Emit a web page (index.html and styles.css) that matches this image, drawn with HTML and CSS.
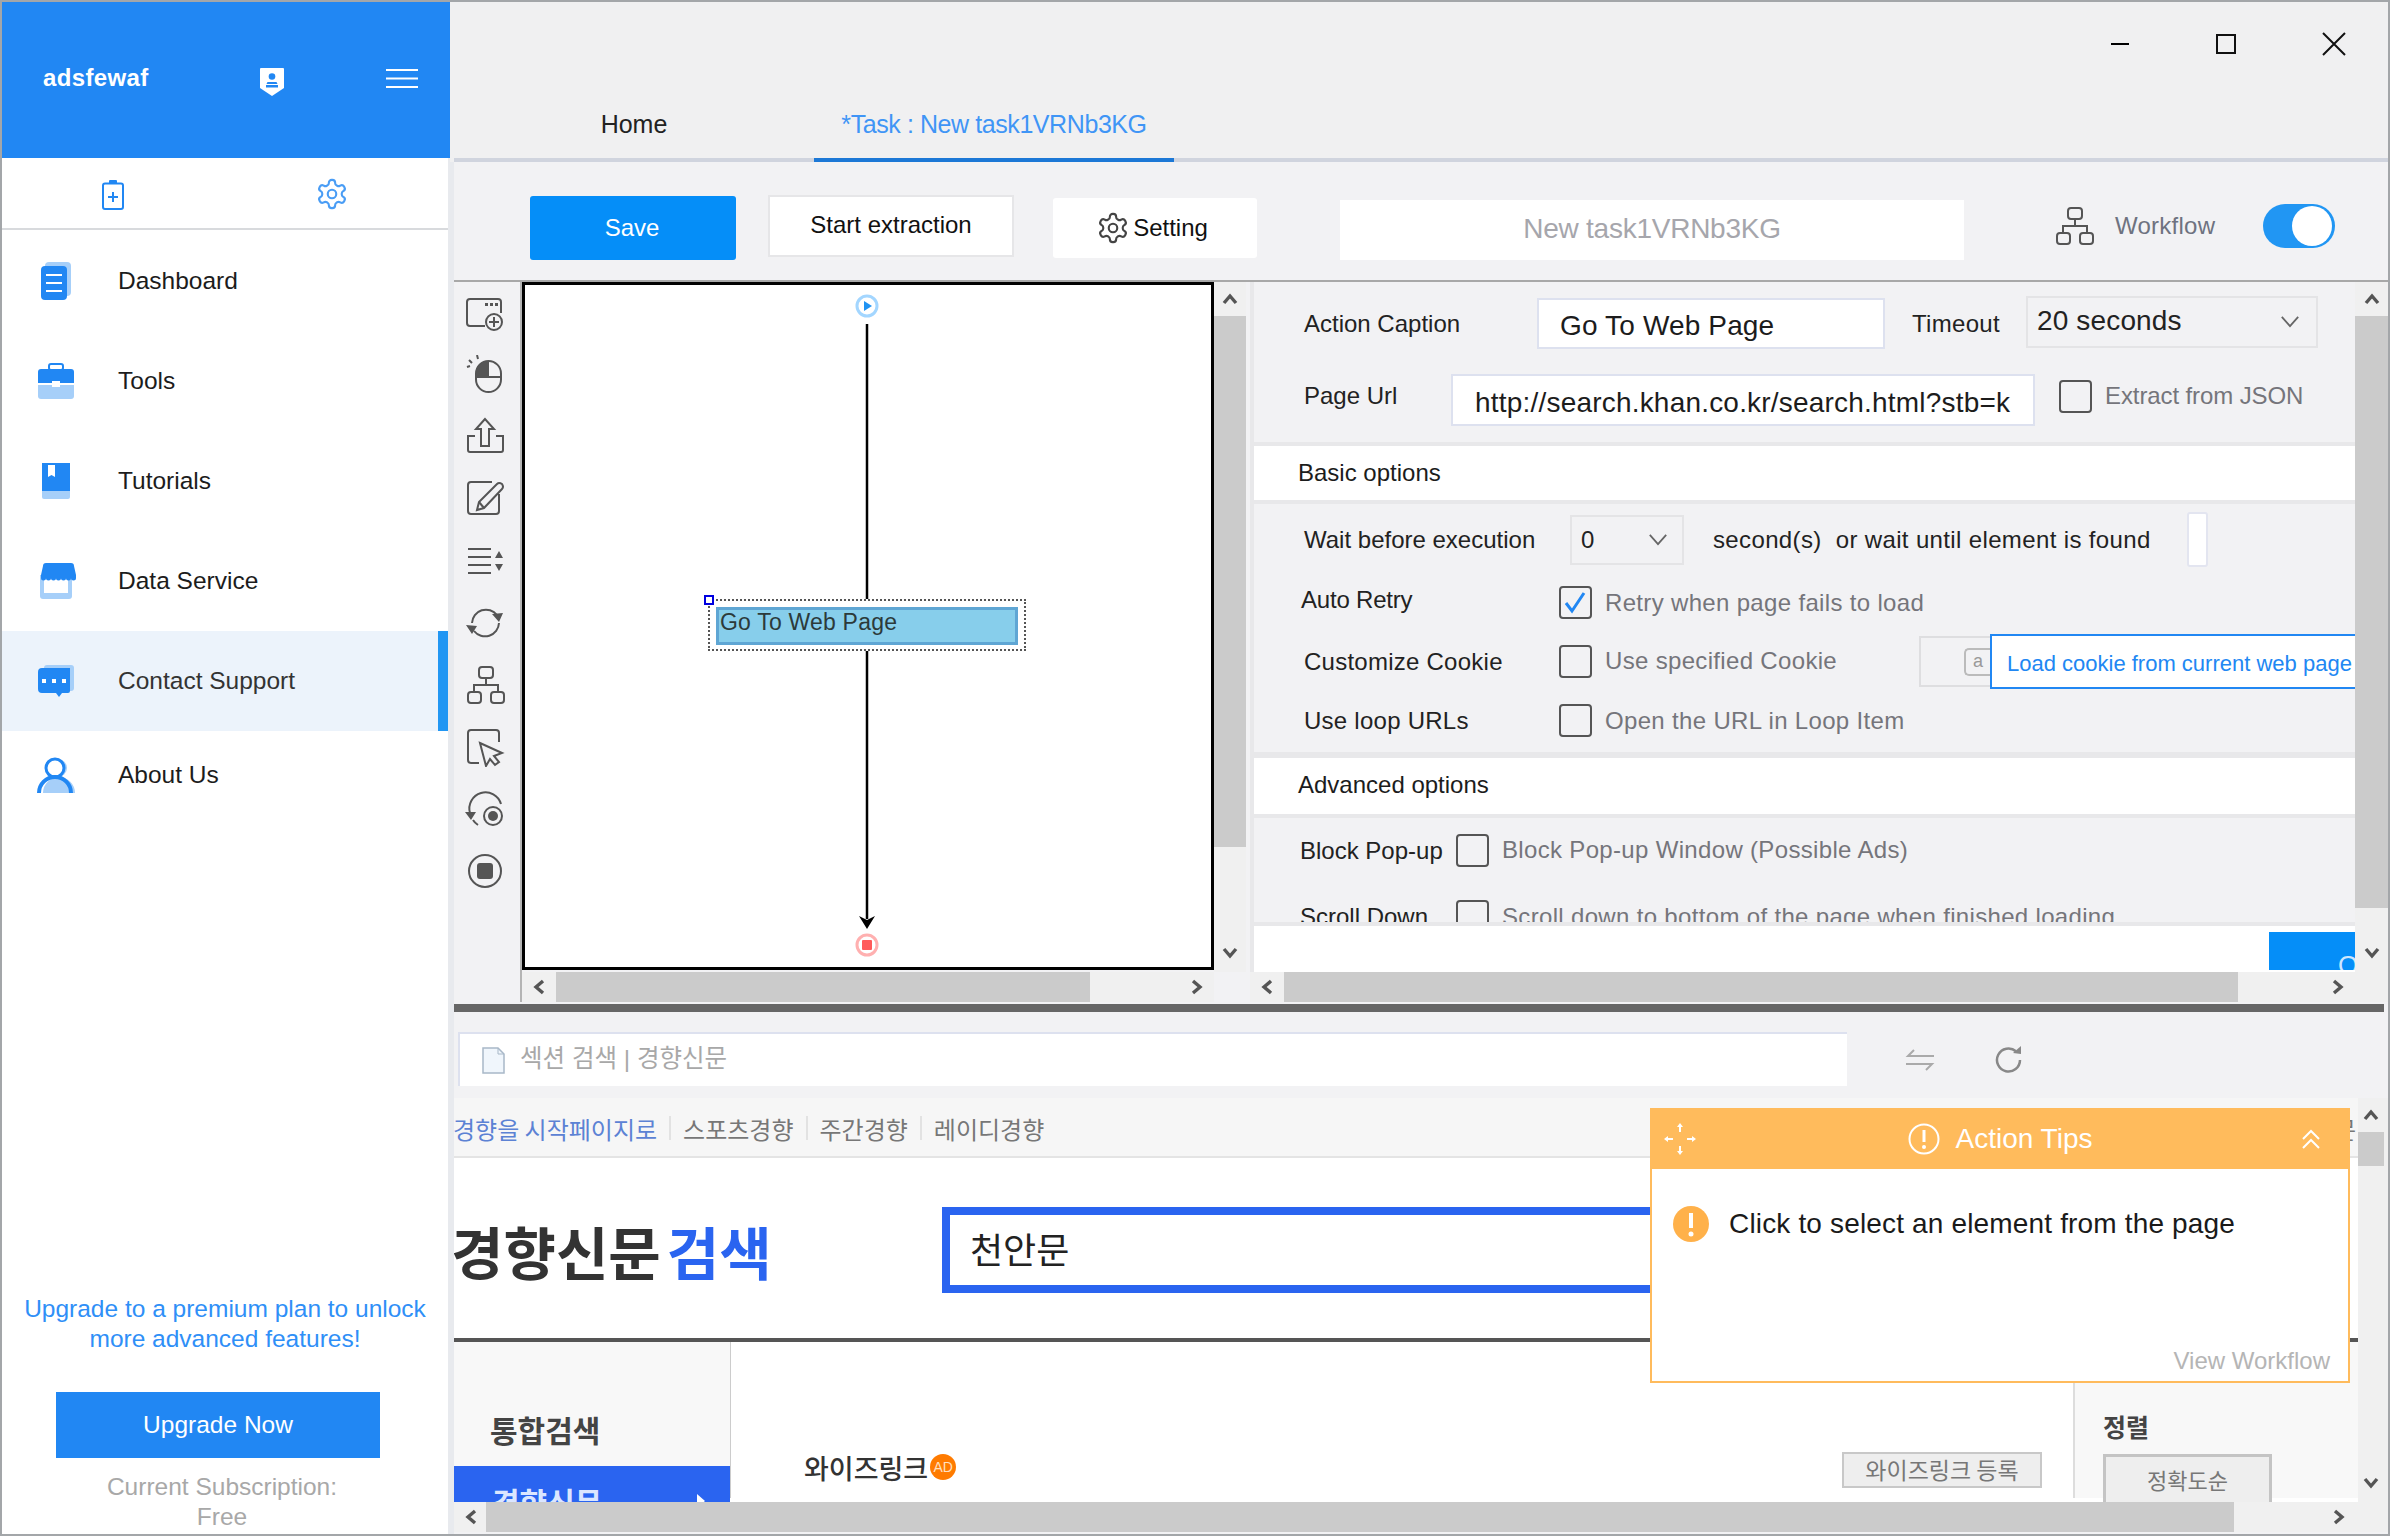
FILE: index.html
```html
<!DOCTYPE html>
<html lang="en">
<head>
  <meta charset="UTF-8">
  <title>Task designer</title>
  <link rel="stylesheet" href="styles.css">
</head>
<body>
<svg class="defs" xmlns="http://www.w3.org/2000/svg">
  <symbol id="gear" viewBox="0 0 24 24"><path d="M12.22 2h-.44a2 2 0 0 0-2 2v.18a2 2 0 0 1-1 1.73l-.43.25a2 2 0 0 1-2 0l-.15-.08a2 2 0 0 0-2.73.73l-.22.38a2 2 0 0 0 .73 2.73l.15.1a2 2 0 0 1 1 1.72v.51a2 2 0 0 1-1 1.74l-.15.09a2 2 0 0 0-.73 2.73l.22.38a2 2 0 0 0 2.73.73l.15-.08a2 2 0 0 1 2 0l.43.25a2 2 0 0 1 1 1.73V20a2 2 0 0 0 2 2h.44a2 2 0 0 0 2-2v-.18a2 2 0 0 1 1-1.73l.43-.25a2 2 0 0 1 2 0l.15.08a2 2 0 0 0 2.73-.73l.22-.39a2 2 0 0 0-.73-2.73l-.15-.08a2 2 0 0 1-1-1.74v-.5a2 2 0 0 1 1-1.74l.15-.09a2 2 0 0 0 .73-2.73l-.22-.38a2 2 0 0 0-2.73-.73l-.15.08a2 2 0 0 1-2 0l-.43-.25a2 2 0 0 1-1-1.73V4a2 2 0 0 0-2-2z" fill="none" stroke="currentColor" stroke-width="1.5"/><circle cx="12" cy="12" r="3" fill="none" stroke="currentColor" stroke-width="1.5"/></symbol>
  <symbol id="tree" viewBox="0 0 40 40"><g fill="none" stroke="currentColor" stroke-width="2"><rect x="14" y="2" width="14" height="11" rx="3"/><path d="M21 13v7M9 27v-7h24v7"/><rect x="3" y="27" width="13" height="11" rx="3"/><rect x="26" y="27" width="13" height="11" rx="3"/></g></symbol>
  <symbol id="a-up" viewBox="0 0 16 16"><path d="M2 12 8 5l6 7" fill="none" stroke="currentColor" stroke-width="3.4"/></symbol>
  <symbol id="a-down" viewBox="0 0 16 16"><path d="M2 4l6 7 6-7" fill="none" stroke="currentColor" stroke-width="3.4"/></symbol>
  <symbol id="a-left" viewBox="0 0 16 16"><path d="M12 2 5 8l7 6" fill="none" stroke="currentColor" stroke-width="3.4"/></symbol>
  <symbol id="a-right" viewBox="0 0 16 16"><path d="M4 2l7 6-7 6" fill="none" stroke="currentColor" stroke-width="3.4"/></symbol>
  <symbol id="chev" viewBox="0 0 22 14"><path d="M2 2l9 10 9-10" fill="none" stroke="currentColor" stroke-width="2"/></symbol>
</svg>

<div class="window">
  <aside class="sidebar">
    <div class="side-head">
      <span class="user">adsfewaf</span>
      <svg class="shield" viewBox="0 0 24 28"><path d="M1 0h22a1 1 0 0 1 1 1v19l-12 8-12-8V1a1 1 0 0 1 1-1z" fill="#fff"/><circle cx="12" cy="8.5" r="3.3" fill="#2187f3"/><path d="M7.500 14h9l1 2h-11zM6 17h12v2.500H6z" fill="#2187f3"/></svg>
      <svg class="burger" viewBox="0 0 32 19"><path d="M0 1h32M0 9.500h32M0 18h32" stroke="#fff" stroke-width="2"/></svg>
    </div>
    <div class="side-body">
      <div class="side-tabs">
        <svg class="side-tab clip" viewBox="0 0 22 30"><rect x="1" y="3.500" width="20" height="25.500" rx="2" fill="none" stroke="#2187f3" stroke-width="2"/><rect x="7" y="0" width="8" height="4" rx="1" fill="#2187f3"/><path d="M11 12v10M6 17h10" stroke="#2187f3" stroke-width="2"/></svg>
        <svg class="side-tab cog"><use href="#gear"/></svg>
      </div>
      <nav class="nav">
        <a class="nav-item">
          <span class="nav-icon"><svg width="30" height="38" viewBox="0 0 30 38"><rect x="4" y="0" width="26" height="34" rx="4" fill="#a6cff9"/><rect x="0" y="4" width="26" height="34" rx="4" fill="#2187f3"/><path d="M5 13h16M5 21h16M5 29h16" stroke="#fff" stroke-width="2"/></svg></span>
          Dashboard
        </a>
        <a class="nav-item">
          <span class="nav-icon"><svg width="36" height="36" viewBox="0 0 36 36"><rect x="11" y="1" width="14" height="6" rx="2" fill="none" stroke="#2187f3" stroke-width="2"/><path d="M0 9a3 3 0 0 1 3-3h30a3 3 0 0 1 3 3v11H0z" fill="#2187f3"/><path d="M0 22h36v11a3 3 0 0 1-3 3H3a3 3 0 0 1-3-3z" fill="#a6cff9"/><rect x="14" y="18" width="8" height="6" fill="#fff"/></svg></span>
          Tools
        </a>
        <a class="nav-item">
          <span class="nav-icon"><svg width="28" height="36" viewBox="0 0 28 36"><path d="M0 0h28v28H0z" fill="#2187f3"/><path d="M0 28h28v6a2 2 0 0 1-2 2H2a2 2 0 0 1-2-2z" fill="#a6cff9"/><path d="M6 2h7v12l-3.500-2L6 14z" fill="#fff"/></svg></span>
          Tutorials
        </a>
        <a class="nav-item">
          <span class="nav-icon"><svg width="40" height="36" viewBox="0 0 40 36"><path d="M4 12h32v21a3 3 0 0 1-3 3H7a3 3 0 0 1-3-3z" fill="#a6cff9"/><rect x="8" y="16" width="24" height="14" fill="#fff"/><path d="M5 0h30a3 3 0 0 1 3 3l2 9v3a2 2 0 0 1-5 0 2.500 2.500 0 0 1-5 0 2.500 2.500 0 0 1-5 0 2.500 2.500 0 0 1-5 0 2.500 2.500 0 0 1-5 0 2.500 2.500 0 0 1-5 0 2 2 0 0 1-5 0v-3l2-9a3 3 0 0 1 3-3z" fill="#2187f3"/></svg></span>
          Data Service
        </a>
        <a class="nav-item active">
          <span class="nav-icon"><svg width="36" height="32" viewBox="0 0 36 32"><rect x="6" y="0" width="30" height="26" rx="3" fill="#a6cff9"/><path d="M4 3h28a4 4 0 0 1 0 0v23a2 2 0 0 1-2 2H24l-3 4-3-4H4a4 4 0 0 1-4-4V7a4 4 0 0 1 4-4z" fill="#2187f3"/><path d="M4 16h4M14 16h4M24 16h4" stroke="#fff" stroke-width="4"/></svg></span>
          Contact Support
        </a>
        <a class="nav-item last">
          <span class="nav-icon"><svg width="38" height="36" viewBox="0 0 38 36"><circle cx="21" cy="11" r="9" fill="#a6cff9"/><path d="M38 36a16 16 0 0 0-32 0z" fill="#a6cff9"/><circle cx="18" cy="11" r="9" fill="#fff" stroke="#2187f3" stroke-width="3"/><path d="M2 36a16 16 0 0 1 32 0" fill="none" stroke="#2187f3" stroke-width="4"/></svg></span>
          About Us
        </a>
      </nav>
      <div class="side-foot">
        <p class="promo">Upgrade to a premium plan to unlock more advanced features!</p>
        <button class="upgrade">Upgrade Now</button>
        <p class="plan">Current Subscription:<br>Free</p>
      </div>
    </div>
  </aside>

  <main class="main">
    <header class="topbar">
      <div class="win-btns">
        <span class="win-btn"><svg class="win-min" width="18" height="2"><rect width="18" height="2" fill="#000"/></svg></span>
        <span class="win-btn"><svg width="20" height="20" viewBox="0 0 20 20"><rect x="1" y="1" width="18" height="18" fill="none" stroke="#111" stroke-width="2"/></svg></span>
        <span class="win-btn"><svg width="24" height="24" viewBox="0 0 24 24"><path d="M1 1l22 22M23 1L1 23" stroke="#111" stroke-width="2"/></svg></span>
      </div>
      <div class="tabs">
        <span class="tab">Home</span>
        <span class="tab current">*Task : New task1VRNb3KG</span>
      </div>
    </header>

    <div class="content">
      <div class="toolbar">
        <button class="btn-save">Save</button>
        <button class="btn-start">Start extraction</button>
        <button class="btn-setting"><svg class="set-gear"><use href="#gear"/></svg>Setting</button>
        <div class="task-name">New task1VRNb3KG</div>
        <svg class="wf-icon"><use href="#tree"/></svg>
        <span class="wf-label">Workflow</span>
        <span class="toggle"><span class="knob"></span></span>
      </div>

      <div class="designer">
        <section class="flow-pane">
          <div class="tools">
            <span class="tool"><svg viewBox="0 0 40 40"><g fill="none" stroke="#555" stroke-width="2"><path d="M36 20V9a3 3 0 0 0-3-3H5a3 3 0 0 0-3 3v21a3 3 0 0 0 3 3h15"/><circle cx="29" cy="29" r="8"/><path d="M29 24v10M24 29h10"/></g><path d="M20 10h3v3h-3zM25 10h3v3h-3zM30 10h3v3h-3z" fill="#555"/></svg></span>
            <span class="tool"><svg viewBox="0 0 40 40"><rect x="11" y="6" width="25" height="31" rx="12.500" fill="none" stroke="#555" stroke-width="2"/><path d="M23 6v16H11V18A12 12 0 0 1 23 6z" fill="#555"/><path d="M11 22h25M23 6v16" stroke="#555" stroke-width="2"/><path d="M12 0l1 4M4 5l3 3M2 12l3-1" stroke="#555" stroke-width="2"/></svg></span>
            <span class="tool"><svg viewBox="0 0 40 40"><g fill="none" stroke="#555" stroke-width="2"><path d="M10 19H3v14a2 2 0 0 0 2 2h31a2 2 0 0 0 2-2V19h-7"/><path d="M20 2l-9 10h5v17h8V12h5z"/></g></svg></span>
            <span class="tool"><svg viewBox="0 0 40 40"><g fill="none" stroke="#555" stroke-width="2"><path d="M27 3H6a3 3 0 0 0-3 3v26a3 3 0 0 0 3 3h25a3 3 0 0 0 3-3V15"/><path d="M12 31l2-8L32 5q2-2 5 0 2 3 0 5L19 29z"/><path d="M14 23l5 6"/></g></svg></span>
            <span class="tool"><svg viewBox="0 0 40 40"><path d="M3 8h23M3 16h23M3 24h23M3 32h23" stroke="#555" stroke-width="2"/><path d="M34 10l4 7h-8zM34 30l4-7h-8z" fill="#555"/></svg></span>
            <span class="tool"><svg viewBox="0 0 40 40"><g fill="none" stroke="#555" stroke-width="2"><path d="M7 20A14 14 0 0 1 32 12"/><path d="M34 20A14 14 0 0 1 9 28"/></g><path d="M27 11l11-1-4 9zM1 22l6 9 5-8z" fill="#555"/></svg></span>
            <span class="tool"><svg class="tool-tree"><use href="#tree"/></svg></span>
            <span class="tool"><svg viewBox="0 0 40 40"><g fill="none" stroke="#555" stroke-width="2"><path d="M14 36H6a3 3 0 0 1-3-3V6a3 3 0 0 1 3-3h25a3 3 0 0 1 3 3v9"/><path d="M15 16l22 10-8 3 5 6-4 3-5-6-4 7z"/></g></svg></span>
            <span class="tool"><svg viewBox="0 0 40 40"><g fill="none" stroke="#555" stroke-width="2"><path d="M5 24A15 15 0 0 1 36 15"/><path d="M13 36a16 16 0 0 1-5-5"/><circle cx="28" cy="27" r="9"/></g><circle cx="28" cy="27" r="5" fill="#555"/><path d="M0 23l6 8 5-8z" fill="#555"/></svg></span>
            <span class="tool"><svg viewBox="0 0 40 40"><circle cx="20" cy="20" r="16" fill="none" stroke="#555" stroke-width="2"/><rect x="12" y="12" width="16" height="16" rx="3" fill="#555"/></svg></span>
          </div>
          <div class="canvas">
            <svg class="links"><path d="M342 39V317M342 363V634" stroke="#000" stroke-width="2.500" fill="none"/><path d="M334 631l8 4 8-4-8 13z" fill="#000"/></svg>
            <svg class="port port-start" viewBox="0 0 24 24"><circle cx="12" cy="12" r="10" fill="#fff" stroke="#a3d6ff" stroke-width="3"/><path d="M9 7l8 5-8 5z" fill="#1f93f3"/></svg>
            <div class="node-frame"><span class="node-handle"></span><div class="node">Go To Web Page</div></div>
            <svg class="port port-end" viewBox="0 0 24 24"><circle cx="12" cy="12" r="10" fill="#fff" stroke="#ffb0b0" stroke-width="3"/><rect x="7" y="7" width="10" height="10" rx="1" fill="#ff5a5a"/></svg>
          </div>
          <div class="vbar">
            <span class="sb-end"><svg class="sb-arrow"><use href="#a-up"/></svg></span>
            <span class="thumb flow-vthumb"></span>
            <span class="sb-fill"></span>
            <span class="sb-end last"><svg class="sb-arrow"><use href="#a-down"/></svg></span>
          </div>
          <div class="hbar flow-hbar">
            <span class="sb-end"><svg class="sb-arrow"><use href="#a-left"/></svg></span>
            <span class="thumb flow-hthumb"></span>
            <span class="sb-fill"></span>
            <span class="sb-end"><svg class="sb-arrow"><use href="#a-right"/></svg></span>
          </div>
        </section>

        <section class="props-pane">
          <div class="props">
            <div class="form">
              <div class="row row-caption">
                <label class="lbl">Action Caption</label>
                <div class="field caption-field">Go To Web Page</div>
                <label class="lbl timeout-lbl">Timeout</label>
                <div class="select timeout">20 seconds<svg class="chev"><use href="#chev"/></svg></div>
              </div>
              <div class="row row-url">
                <label class="lbl">Page Url</label>
                <div class="field url-field">http://search.khan.co.kr/search.html?stb=k</div>
                <span class="check json-check"></span>
                <span class="opt">Extract from JSON</span>
              </div>
              <div class="section">Basic options</div>
              <div class="section-body">
                <div class="row row-wait">
                  <label class="lbl">Wait before execution</label>
                  <div class="select wait">0<svg class="chev"><use href="#chev"/></svg></div>
                  <span class="wait-text">second(s)&nbsp; or wait until element is found</span>
                  <span class="wait-box"></span>
                </div>
                <div class="row row-check row-retry">
                  <label class="lbl">Auto Retry</label>
                  <span class="check"><svg width="29" height="29" viewBox="0 0 29 29"><path d="M5 15l6 8L23 5" fill="none" stroke="#2187f3" stroke-width="3"/></svg></span>
                  <span class="opt">Retry when page fails to load</span>
                </div>
                <div class="row row-check row-cookie">
                  <label class="lbl">Customize Cookie</label>
                  <span class="check"></span>
                  <span class="opt">Use specified Cookie</span>
                  <div class="cookie-input"><span class="cookie-a">a</span></div>
                  <div class="cookie-load">Load cookie from current web page</div>
                </div>
                <div class="row row-check row-loop">
                  <label class="lbl">Use loop URLs</label>
                  <span class="check"></span>
                  <span class="opt">Open the URL in Loop Item</span>
                </div>
              </div>
              <div class="section section-adv">Advanced options</div>
              <div class="row row-check row-block">
                <label class="lbl">Block Pop-up</label>
                <span class="check"></span>
                <span class="opt">Block Pop-up Window (Possible Ads)</span>
              </div>
              <div class="row row-check row-scroll">
                <label class="lbl">Scroll Down</label>
                <span class="check"></span>
                <span class="opt">Scroll down to bottom of the page when finished loading</span>
              </div>
            </div>
            <div class="props-foot"><button class="btn-ok">OK</button></div>
          </div>
          <div class="vbar">
            <span class="sb-end"><svg class="sb-arrow"><use href="#a-up"/></svg></span>
            <span class="thumb props-vthumb"></span>
            <span class="sb-fill"></span>
            <span class="sb-end last"><svg class="sb-arrow"><use href="#a-down"/></svg></span>
          </div>
          <div class="hbar props-hbar">
            <span class="sb-end"><svg class="sb-arrow"><use href="#a-left"/></svg></span>
            <span class="thumb props-hthumb"></span>
            <span class="sb-fill"></span>
            <span class="sb-end"><svg class="sb-arrow"><use href="#a-right"/></svg></span>
          </div>
        </section>
      </div>

      <div class="splitter"></div>

      <div class="browser-bar">
        <div class="address">
          <svg class="file-icon" viewBox="0 0 23 27"><path d="M1 1h15l6 6v19H1z" fill="#f0f6fc" stroke="#a8b8c8" stroke-width="1.500"/><path d="M16 1v6h6" fill="none" stroke="#a8b8c8"/></svg>
          섹션 검색 | 경향신문
        </div>
        <svg class="swap" viewBox="0 0 30 22"><path d="M29 7H3l6-6M1 15h26l-6 6" fill="none" stroke="#aaa" stroke-width="2"/></svg>
        <svg class="reload" viewBox="0 0 28 28"><path d="M25 14a11.500 11.500 0 1 1-4-8.700" fill="none" stroke="#888" stroke-width="2.500"/><path d="M18 7l8 1V0z" fill="#888"/></svg>
      </div>

      <div class="browser">
        <div class="webview">
          <div class="site-nav">
            <a class="site-link home">경향을 시작페이지로</a><i class="sep"></i>
            <a class="site-link">스포츠경향</a><i class="sep"></i>
            <a class="site-link">주간경향</a><i class="sep"></i>
            <a class="site-link">레이디경향</a>
            <a class="site-link site-end">문</a>
          </div>
          <div class="site-head">
            <div class="site-logo">경향신문 <em>검색</em></div>
            <div class="site-search">천안문</div>
          </div>
          <div class="site-body">
            <div class="site-left">
              <div class="site-all">통합검색</div>
              <div class="site-cur">경향신문<span class="cur-arrow"></span></div>
            </div>
            <div class="site-main">
              <span class="ad-title">와이즈링크</span>
              <span class="ad-badge">AD</span>
              <span class="ad-reg">와이즈링크 등록</span>
            </div>
            <div class="site-right">
              <div class="sort-title">정렬</div>
              <div class="sort-btn">정확도순</div>
            </div>
          </div>

          <div class="tips">
            <div class="tips-head">
              <svg class="tips-move" viewBox="0 0 32 32"><path d="M16 9V4M16 23v5M9 16H4M23 16h5" stroke="#fff" stroke-width="2"/><path d="M16 0l3 4h-6zM16 32l-3-4h6zM0 16l4-3v6zM32 16l-4 3v-6z" fill="#fff"/></svg>
              <div class="tips-title">
                <svg class="tips-info" viewBox="0 0 32 32"><circle cx="16" cy="16" r="14.500" fill="none" stroke="#fff" stroke-width="2"/><path d="M16 7v12" stroke="#fff" stroke-width="3"/><circle cx="16" cy="24" r="2" fill="#fff"/></svg>
                Action Tips
              </div>
              <svg class="tips-fold" viewBox="0 0 20 20"><path d="M2 10l8-8 8 8M2 19l8-8 8 8" fill="none" stroke="#fff" stroke-width="2"/></svg>
            </div>
            <div class="tips-body">
              <div class="tips-msg">
                <svg class="tips-warn" viewBox="0 0 36 36"><circle cx="18" cy="18" r="18" fill="#ffb14a"/><path d="M18 7v15" stroke="#fff" stroke-width="4"/><circle cx="18" cy="28" r="2.500" fill="#fff"/></svg>
                Click to select an element from the page
              </div>
              <a class="tips-link">View Workflow</a>
            </div>
          </div>
        </div>
        <div class="vbar web-vbar">
          <span class="sb-end"><svg class="sb-arrow"><use href="#a-up"/></svg></span>
          <span class="thumb web-vthumb"></span>
          <span class="sb-fill"></span>
          <span class="sb-end last"><svg class="sb-arrow"><use href="#a-down"/></svg></span>
        </div>
        <div class="hbar web-hbar">
          <span class="sb-end"><svg class="sb-arrow"><use href="#a-left"/></svg></span>
          <span class="thumb web-hthumb"></span>
          <span class="sb-fill"></span>
          <span class="sb-end"><svg class="sb-arrow"><use href="#a-right"/></svg></span>
        </div>
      </div>
    </div>
  </main>
</div>
</body>
</html>
```

FILE: styles.css
```css
* {
  box-sizing: border-box;
}

body {
  margin: 0;
  font-family: "Liberation Sans", Arial, "Noto Sans CJK KR", sans-serif;
  color: #222;
}

button {
  font-family: inherit;
  border: none;
  padding: 0;
  cursor: pointer;
}

.defs {
  display: none;
}

.window {
  display: flex;
  width: 2390px;
  height: 1536px;
  border: 2px solid #a3a6a9;
  background-color: #e8eaee;
  overflow: hidden;
}

/* sidebar */
.sidebar {
  display: flex;
  flex-direction: column;
  width: 448px;
  flex: none;
}

.side-head {
  display: flex;
  align-items: flex-start;
  height: 156px;
  background-color: #2187f3;
  color: white;
}

.user {
  margin: 60px 0 0 41px;
  width: 217px;
  font-size: 24px;
  line-height: 32px;
  font-weight: bold;
  letter-spacing: 0.35px;
}

.shield {
  width: 24px;
  height: 28px;
  margin-top: 66px;
}

.burger {
  width: 32px;
  height: 19px;
  margin: 67px 0 0 102px;
}

.side-body {
  display: flex;
  flex-direction: column;
  flex: 1;
  width: 446px;
  background-color: white;
}

.side-tabs {
  height: 72px;
  border-bottom: 2px solid #d8dadd;
  display: flex;
  align-items: flex-start;
}

.side-tab.clip {
  width: 22px;
  height: 30px;
  margin: 22px 0 0 100px;
}

.side-tab.cog {
  width: 34px;
  height: 34px;
  margin: 19px 0 0 191px;
  color: #4a9df5;
}

.nav {
  display: flex;
  flex-direction: column;
  margin-top: 1px;
}

.nav-item {
  display: flex;
  align-items: center;
  height: 100px;
  font-size: 24.5px;
  color: #1c1c1c;
}

.nav-item.active {
  background-color: #ecf3fb;
  border-right: 10px solid #2196f3;
  color: #333;
}

.nav-item.last {
  height: 88px;
}

.nav-icon {
  display: flex;
  justify-content: center;
  width: 108px;
  margin-right: 8px;
}

.side-foot {
  margin-top: auto;
  padding-bottom: 2px;
}

.promo {
  margin: 0;
  padding: 0 14px;
  font-size: 24.5px;
  line-height: 30px;
  text-align: center;
  color: #2f8ff7;
}

.upgrade {
  display: block;
  width: 324px;
  height: 66px;
  margin: 38px 0 0 54px;
  background-color: #2187f3;
  color: white;
  font-size: 24.5px;
}

.plan {
  margin: 14px 6px 0 0;
  font-size: 24.5px;
  line-height: 30px;
  text-align: center;
  color: #a8a8a8;
}

/* title bar and tabs */
.main {
  flex: 1;
  display: flex;
  flex-direction: column;
  min-width: 0;
}

.topbar {
  background-color: #f0f0f1;
}

.win-btns {
  display: flex;
  justify-content: flex-end;
  height: 84px;
}

.win-btn {
  display: flex;
  align-items: center;
  justify-content: center;
  width: 108px;
}

.win-min {
  margin-left: 3px;
}

.tabs {
  display: flex;
  margin-left: 4px;
  height: 76px;
  border-bottom: 4px solid #d0d4de;
}

.tab {
  width: 360px;
  height: 76px;
  padding-top: 22px;
  text-align: center;
  font-size: 25px;
  line-height: 32px;
}

.tab.current {
  color: #3f95f6;
  border-bottom: 4px solid #1c78d6;
  letter-spacing: -0.42px;
}

.content {
  flex: 1;
  display: flex;
  flex-direction: column;
  margin-left: 4px;
  background-color: #f2f2f4;
  min-height: 0;
}

/* toolbar */
.toolbar {
  display: flex;
  align-items: flex-start;
  height: 118px;
  font-size: 24px;
}

.btn-save {
  width: 206px;
  height: 64px;
  margin: 34px 0 0 76px;
  padding-right: 2px;
  border-radius: 3px;
  background-color: #058ef8;
  color: white;
  font-size: 24px;
}

.btn-start {
  width: 246px;
  height: 62px;
  margin: 33px 0 0 32px;
  background-color: white;
  border: 2px solid #e6e6e8;
  font-size: 24px;
  color: #111;
  padding-bottom: 2px;
}

.btn-setting {
  display: flex;
  align-items: center;
  justify-content: center;
  width: 204px;
  height: 60px;
  margin: 36px 0 0 39px;
  padding-right: 6px;
  background-color: white;
  border-radius: 3px;
  font-size: 24px;
  color: #111;
}

.set-gear {
  width: 34px;
  height: 34px;
  margin-right: 3px;
  color: #444;
}

.task-name {
  width: 624px;
  height: 60px;
  margin: 38px 0 0 83px;
  background-color: white;
  color: #a6a6ac;
  font-size: 28px;
  line-height: 58px;
  text-align: center;
  letter-spacing: -0.25px;
}

.wf-icon {
  width: 40px;
  height: 40px;
  margin: 44px 0 0 90px;
  color: #555;
}

.wf-label {
  margin: 47px 0 0 21px;
  width: 148px;
  line-height: 34px;
  color: #6e7280;
  letter-spacing: 0.25px;
}

.toggle {
  display: flex;
  justify-content: flex-end;
  align-items: center;
  width: 72px;
  height: 44px;
  margin-top: 42px;
  padding-right: 3px;
  border-radius: 22px;
  background-color: #2196f3;
}

.knob {
  width: 40px;
  height: 40px;
  border-radius: 50%;
  background-color: white;
}

/* designer */
.designer {
  display: flex;
  height: 724px;
  border-top: 2px solid #a8a8a8;
}

.flow-pane {
  display: grid;
  grid-template-columns: 68px 692px 32px;
  grid-template-rows: 690px 30px;
  width: 796px;
}

.tools {
  grid-row: 1 / 3;
  display: flex;
  flex-direction: column;
  border-right: 2px solid #b4b4b4;
}

.tool {
  display: flex;
  align-items: center;
  justify-content: center;
  height: 62px;
  flex: none;
}

.tool svg {
  width: 40px;
  height: 40px;
  margin-right: 4px;
}

.tool-tree {
  color: #555;
}

.canvas {
  position: relative;
  height: 688px;
  background-color: white;
  border: 3px solid #000;
}

.links {
  position: absolute;
  left: 0;
  top: 0;
  width: 100%;
  height: 100%;
}

.port {
  position: absolute;
  left: 330px;
  width: 24px;
  height: 24px;
}

.port-start {
  top: 9px;
}

.port-end {
  top: 648px;
}

.node-frame {
  position: absolute;
  left: 183px;
  top: 314px;
  width: 318px;
  height: 52px;
  padding: 6px 6px;
  border: 2px dotted #555;
  background-color: white;
}

.node-handle {
  position: absolute;
  left: -6px;
  top: -6px;
  width: 10px;
  height: 10px;
  border: 2px solid #0000e0;
  background-color: white;
}

.node {
  height: 38px;
  border: 3px solid #5fa6d4;
  background-color: #87ceeb;
  padding-left: 1px;
  font-size: 23px;
  line-height: 25px;
  color: #2c3a3a;
  letter-spacing: 0.2px;
}

/* scrollbars */
.vbar {
  display: flex;
  flex-direction: column;
  background-color: #f0f0f0;
}

.hbar {
  display: flex;
  background-color: #f0f0f0;
}

.sb-end {
  display: flex;
  align-items: center;
  justify-content: center;
  flex: none;
  width: 34px;
  color: #555;
}

.vbar .sb-end {
  width: auto;
  height: 34px;
}

.vbar .sb-end.last {
  height: 38px;
}

.sb-arrow {
  width: 16px;
  height: 16px;
}

.sb-fill {
  flex: 1;
}

.thumb {
  flex: none;
  background-color: #cbcbcb;
}

.flow-vthumb {
  height: 531px;
}

.flow-hbar {
  grid-column: 2 / 3;
}

.flow-hthumb {
  width: 534px;
}

/* properties */
.props-pane {
  display: grid;
  grid-template-columns: 1105px 33px;
  grid-template-rows: 690px 30px;
  width: 1138px;
}

.props {
  display: flex;
  flex-direction: column;
  border-left: 4px solid #e8e8ea;
  min-width: 0;
}

.form {
  height: 640px;
  overflow: hidden;
  font-size: 24px;
  padding-top: 14px;
}

.row {
  display: flex;
  align-items: center;
  padding-left: 50px;
  white-space: nowrap;
  color: #222;
}

.lbl {
  flex: none;
}

.row-caption {
  height: 54px;
}

.row-caption > .lbl:first-child {
  width: 233px;
  margin-top: 2px;
}

.field {
  display: flex;
  align-items: center;
  flex: none;
  background-color: white;
  border: 2px solid #dde1ef;
  font-size: 28px;
  color: #1c1c1c;
  overflow: hidden;
  letter-spacing: 0.15px;
}

.caption-field {
  width: 348px;
  height: 51px;
  padding-left: 21px;
  padding-top: 5px;
}

.timeout-lbl {
  margin: 2px 0 0 27px;
  width: 114px;
  letter-spacing: 0.3px;
}

.select {
  display: flex;
  align-items: center;
  justify-content: space-between;
  flex: none;
  border: 2px solid #e4e4e6;
  font-size: 28px;
}

.timeout {
  width: 292px;
  height: 52px;
  padding: 0 16px 2px 9px;
  margin-bottom: 2px;
  letter-spacing: 0.15px;
}

.chev {
  width: 20px;
  height: 13px;
  color: #666;
}

.row-url {
  margin-top: 24px;
  height: 52px;
}

.row-url > .lbl {
  width: 147px;
  margin-top: -8px;
}

.url-field {
  width: 584px;
  height: 52px;
  padding-left: 22px;
  padding-top: 6px;
  letter-spacing: 0.2px;
}

.check {
  display: flex;
  align-items: center;
  justify-content: center;
  flex: none;
  width: 33px;
  height: 33px;
  border: 2px solid #555;
  border-radius: 4px;
}

.json-check {
  margin: -8px 0 0 24px;
}

.opt {
  flex: none;
  margin-left: 13px;
  color: #75757b;
  letter-spacing: 0.33px;
}

.row-url .opt {
  margin-top: -8px;
  letter-spacing: -0.1px;
}

.section {
  height: 62px;
  margin-top: 16px;
  padding: 12px 0 0 44px;
  border-top: 4px solid #e8e8ea;
  border-bottom: 4px solid #e8e8ea;
  background-color: white;
  line-height: 30px;
  color: #1c1c1c;
}

.section-body {
  height: 252px;
  padding-top: 8px;
  border-bottom: 4px solid #e8e8ea;
}

.section-adv {
  margin-top: 0;
  border-top-width: 2px;
}

.row-wait {
  height: 55px;
}

.row-wait .lbl {
  width: 266px;
}

.wait {
  width: 114px;
  height: 50px;
  padding: 0 14px 0 9px;
  font-size: 24px;
}

.wait-text {
  flex: none;
  margin-left: 29px;
  width: 474px;
  letter-spacing: 0.36px;
}

.wait-box {
  flex: none;
  width: 21px;
  height: 55px;
  background-color: white;
  border: 2px solid #e3e5f0;
  border-radius: 3px;
}

.row-check {
  height: 33px;
}

.row-check .lbl {
  width: 255px;
  letter-spacing: 0.25px;
}

.row-retry {
  margin-top: 19px;
}

.row-retry .lbl {
  margin: -6px 0 0 -3px;
  width: 258px;
  letter-spacing: -0.2px;
}

.row-cookie {
  margin-top: 15px;
  height: 55px;
}

.row-cookie .opt {
  width: 314px;
  margin-top: -2px;
}

.cookie-input {
  display: flex;
  align-items: center;
  justify-content: flex-end;
  flex: none;
  width: 71px;
  height: 51px;
  border: 2px solid #dedee0;
  border-right: none;
}

.cookie-a {
  width: 26px;
  height: 28px;
  border: 2px solid #bbb;
  border-right: none;
  border-radius: 5px 0 0 5px;
  font-size: 18px;
  line-height: 22px;
  text-align: center;
  color: #999;
}

.cookie-load {
  flex: none;
  width: 380px;
  height: 55px;
  padding-left: 15px;
  background-color: white;
  border: 2px solid #2187f3;
  font-size: 22px;
  line-height: 55px;
  color: #2187f3;
}

.row-loop {
  margin-top: 15px;
}

.row-block {
  margin-top: 16px;
  padding-left: 46px;
}

.row-block .lbl,
.row-scroll .lbl {
  width: 156px;
  letter-spacing: 0;
}

.row-block .opt {
  margin-top: -2px;
}

.row-scroll {
  margin-top: 33px;
  padding-left: 46px;
}

.props-foot {
  display: flex;
  justify-content: flex-end;
  height: 50px;
  padding-top: 6px;
  border-top: 4px solid #e8e8ea;
  background-color: white;
}

.btn-ok {
  width: 86px;
  height: 38px;
  padding: 18px 0 0 69px;
  background-color: #058ef8;
  color: #cfe7ff;
  font-size: 26px;
  text-align: left;
  overflow: hidden;
  white-space: nowrap;
}

.props-vthumb {
  height: 592px;
}

.props-hbar {
  grid-column: 1 / 3;
}

.props-hthumb {
  width: 954px;
}

.props-hbar .sb-end:last-child {
  margin-right: 33px;
}

.splitter {
  height: 8px;
  margin-right: 4px;
  background-color: #666;
}

/* browser */
.browser-bar {
  display: flex;
  align-items: flex-start;
  height: 86px;
  padding: 20px 0 0 4px;
}

.address {
  display: flex;
  align-items: center;
  width: 1389px;
  height: 54px;
  padding: 0 0 8px 22px;
  background-color: white;
  border-top: 2px solid #dde1ef;
  border-left: 2px solid #dde1ef;
  font-size: 24.5px;
  color: #a8a8a8;
}

.file-icon {
  width: 23px;
  height: 27px;
  margin: 8px 15px 0 0;
}

.swap {
  width: 30px;
  height: 22px;
  margin: 17px 0 0 58px;
}

.reload {
  width: 28px;
  height: 28px;
  margin: 14px 0 0 60px;
}

.browser {
  display: grid;
  grid-template-columns: 1904px 30px;
  grid-template-rows: 404px 30px;
}

.webview {
  position: relative;
  background-color: white;
  overflow: hidden;
  font-family: "Noto Sans CJK KR", sans-serif;
}

.site-nav {
  display: flex;
  align-items: center;
  gap: 12px;
  height: 60px;
  margin-left: -1px;
  padding-top: 2px;
  background-color: #f6f6f6;
  border-bottom: 2px solid #e4e4e4;
  font-size: 24px;
  color: #777;
  white-space: nowrap;
}

.site-link.home {
  color: #5c82d4;
}

.site-end {
  margin-left: auto;
  margin-right: 2px;
}

.sep {
  width: 2px;
  height: 24px;
  background-color: #e2e2e2;
}

.site-head {
  display: flex;
  align-items: center;
  height: 180px;
  padding-top: 3px;
}

.site-logo {
  width: 488px;
  margin-left: -3px;
  flex: none;
  font-size: 57px;
  font-weight: bold;
  color: #333;
  white-space: nowrap;
  word-spacing: -7px;
}

.site-logo em {
  font-style: normal;
  color: #2a64f0;
}

.site-search {
  margin-left: 3px;
  width: 760px;
  height: 86px;
  padding-left: 20px;
  border: 8px solid #2a64f0;
  font-size: 36px;
  line-height: 66px;
  color: #222;
}

.site-body {
  display: flex;
  height: 160px;
  border-top: 4px solid #555;
}

.site-left {
  width: 277px;
  flex: none;
  padding-top: 67px;
  background-color: #f8f8f8;
  border-right: 1px solid #ccc;
}

.site-all {
  padding-left: 36px;
  font-size: 30px;
  line-height: 40px;
  font-weight: bold;
  color: #444;
}

.site-cur {
  position: relative;
  height: 60px;
  margin-top: 17px;
  padding: 15px 0 0 38px;
  background-color: #2a64f0;
  color: #dbe6ff;
  font-size: 30px;
  font-weight: bold;
  line-height: 40px;
}

.cur-arrow {
  position: absolute;
  left: 243px;
  top: 28px;
  width: 0;
  height: 0;
  border-left: 8px solid white;
  border-top: 7px solid transparent;
  border-bottom: 7px solid transparent;
}

.site-main {
  flex: 1;
  display: flex;
  align-items: center;
  align-self: flex-start;
  height: 36px;
  margin-top: 110px;
  padding: 0 31px 0 73px;
}

.ad-title {
  margin-top: -5px;
  font-size: 27px;
  font-weight: 500;
  color: #333;
}

.ad-badge {
  width: 26px;
  height: 26px;
  margin: -6px 0 0 2px;
  border-radius: 50%;
  background-color: #ff7b00;
  color: #ffe0c0;
  font-family: "Liberation Sans", sans-serif;
  font-size: 14px;
  line-height: 26px;
  text-align: center;
}

.ad-reg {
  margin-left: auto;
  width: 200px;
  height: 36px;
  background-color: #eee;
  border: 2px solid #c8c8c8;
  font-size: 23px;
  line-height: 30px;
  text-align: center;
  color: #777;
}

.site-right {
  width: 285px;
  flex: none;
  padding: 66px 0 0 28px;
  background-color: #f8f8f8;
  border-left: 2px solid #ddd;
}

.sort-title {
  font-size: 25px;
  line-height: 36px;
  font-weight: bold;
  color: #444;
}

.sort-btn {
  width: 169px;
  height: 60px;
  margin-top: 10px;
  background-color: #eee;
  border: 3px solid #c4c4c4;
  font-size: 22px;
  line-height: 44px;
  text-align: center;
  color: #777;
}

/* action tips popup */
.tips {
  position: absolute;
  left: 1196px;
  top: 10px;
  display: flex;
  flex-direction: column;
  width: 700px;
  height: 275px;
  font-family: "Liberation Sans", sans-serif;
}

.tips-head {
  display: grid;
  grid-template-columns: 1fr auto 1fr;
  align-items: center;
  flex: none;
  height: 61px;
  background-color: #ffbb5c;
  color: white;
  font-size: 28px;
}

.tips-move {
  width: 32px;
  height: 32px;
  margin-left: 14px;
}

.tips-title {
  display: flex;
  align-items: center;
  gap: 16px;
}

.tips-info {
  width: 32px;
  height: 32px;
}

.tips-fold {
  width: 20px;
  height: 20px;
  justify-self: end;
  margin-right: 29px;
}

.tips-body {
  flex: 1;
  display: flex;
  flex-direction: column;
  padding: 37px 18px 5px 21px;
  background-color: white;
  border: 2px solid #ffbb5c;
  border-top: none;
}

.tips-msg {
  display: flex;
  align-items: center;
  gap: 20px;
  height: 36px;
  font-size: 28px;
  color: #1a1a1a;
  letter-spacing: 0.16px;
}

.tips-warn {
  width: 36px;
  height: 36px;
}

.tips-link {
  margin-top: auto;
  text-align: right;
  font-size: 24px;
  line-height: 30px;
  color: #b5b5b5;
}

.web-vbar .sb-end {
  margin-right: 4px;
}

.web-vthumb {
  height: 34px;
  width: 26px;
}

.web-hbar {
  grid-column: 1 / 3;
}

.web-hthumb {
  width: 1748px;
  margin-left: -2px;
}

.web-hbar .sb-end:last-child {
  margin-right: 32px;
}
```
